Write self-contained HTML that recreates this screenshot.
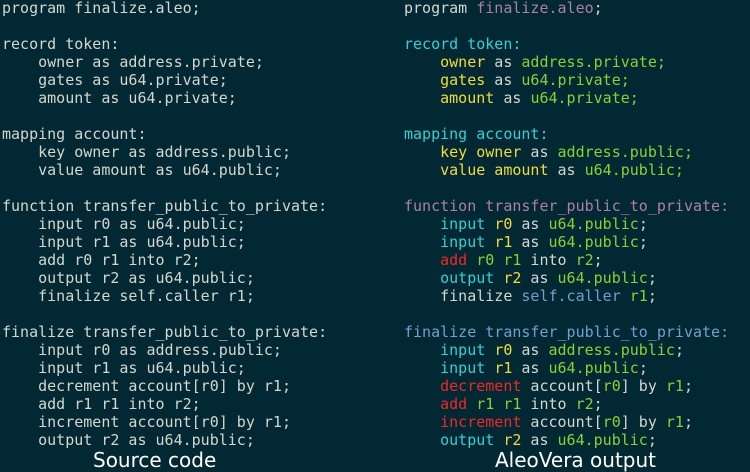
<!DOCTYPE html>
<html><head><meta charset="utf-8"><style>
html,body{margin:0;padding:0;width:750px;height:470px;overflow:hidden;background:#022833;}
pre{position:absolute;top:-1px;margin:0;font-family:"DejaVu Sans Mono","Liberation Mono",monospace;font-size:15px;line-height:18px;color:#d3d7cf;}
#l{left:2px}#r{left:404px}
.p{color:#ad7fa8}.c{color:#34d0d6}.y{color:#f0dc3c}.g{color:#8ad234}.r{color:#ef2929}.b{color:#729fcf}
.lab{position:absolute;top:448px;font-family:"DejaVu Sans","Liberation Sans",sans-serif;font-size:20px;color:#fff;line-height:24px}
</style></head><body>
<pre id="l">program finalize.aleo;

record token:
    owner as address.private;
    gates as u64.private;
    amount as u64.private;

mapping account:
    key owner as address.public;
    value amount as u64.public;

function transfer_public_to_private:
    input r0 as u64.public;
    input r1 as u64.public;
    add r0 r1 into r2;
    output r2 as u64.public;
    finalize self.caller r1;

finalize transfer_public_to_private:
    input r0 as address.public;
    input r1 as u64.public;
    decrement account[r0] by r1;
    add r1 r1 into r2;
    increment account[r0] by r1;
    output r2 as u64.public;</pre>
<pre id="r">program <span class="p">finalize.aleo</span>;

<span class="c">record token:</span>
    <span class="y">owner</span> as <span class="g">address.private;</span>
    <span class="y">gates</span> as <span class="g">u64.private;</span>
    <span class="y">amount</span> as <span class="g">u64.private;</span>

<span class="c">mapping account:</span>
    <span class="y">key owner</span> as <span class="g">address.public;</span>
    <span class="y">value amount</span> as <span class="g">u64.public;</span>

<span class="p">function transfer_public_to_private:</span>
    <span class="c">input</span> <span class="y">r0</span> as <span class="g">u64.public</span>;
    <span class="c">input</span> <span class="y">r1</span> as <span class="g">u64.public</span>;
    <span class="r">add</span> <span class="g">r0 r1</span> into <span class="g">r2</span>;
    <span class="c">output</span> <span class="y">r2</span> as <span class="g">u64.public</span>;
    finalize <span class="b">self.caller</span> <span class="g">r1</span>;

<span class="b">finalize transfer_public_to_private:</span>
    <span class="c">input</span> <span class="y">r0</span> as <span class="g">address.public</span>;
    <span class="c">input</span> <span class="y">r1</span> as <span class="g">u64.public</span>;
    <span class="r">decrement</span> account[<span class="g">r0</span>] by <span class="g">r1</span>;
    <span class="r">add</span> <span class="g">r1 r1</span> into <span class="g">r2</span>;
    <span class="r">increment</span> account[<span class="g">r0</span>] by <span class="g">r1</span>;
    <span class="c">output</span> <span class="y">r2</span> as <span class="g">u64.public</span>;</pre>
<div class="lab" style="left:93px">Source code</div>
<div class="lab" style="left:495px">AleoVera output</div>
</body></html>
